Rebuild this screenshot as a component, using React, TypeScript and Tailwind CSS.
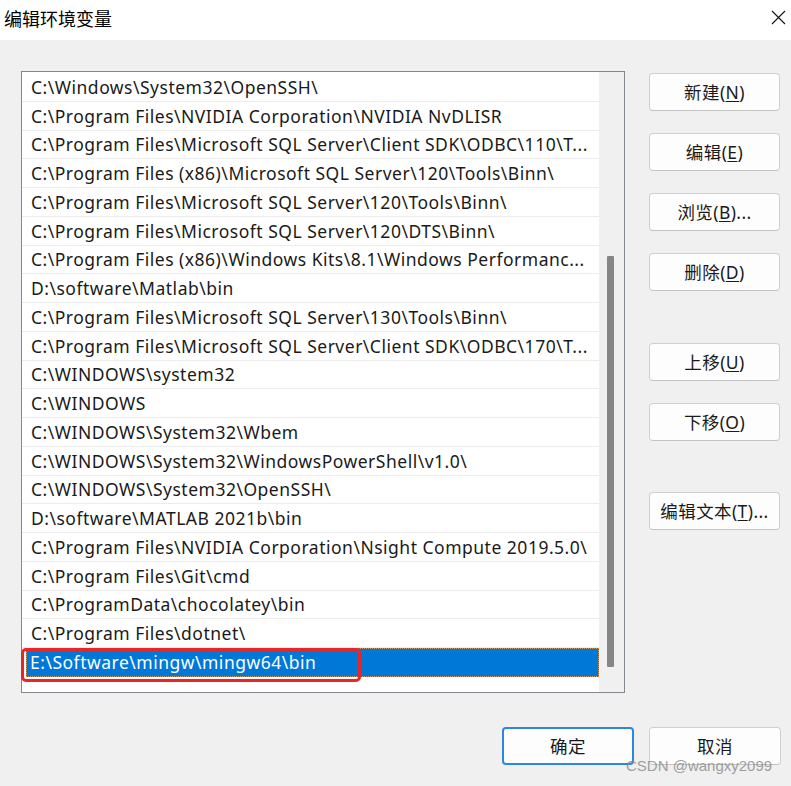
import React from "react";

const paths = [
  "C:\\Windows\\System32\\OpenSSH\\",
  "C:\\Program Files\\NVIDIA Corporation\\NVIDIA NvDLISR",
  "C:\\Program Files\\Microsoft SQL Server\\Client SDK\\ODBC\\110\\T...",
  "C:\\Program Files (x86)\\Microsoft SQL Server\\120\\Tools\\Binn\\",
  "C:\\Program Files\\Microsoft SQL Server\\120\\Tools\\Binn\\",
  "C:\\Program Files\\Microsoft SQL Server\\120\\DTS\\Binn\\",
  "C:\\Program Files (x86)\\Windows Kits\\8.1\\Windows Performanc...",
  "D:\\software\\Matlab\\bin",
  "C:\\Program Files\\Microsoft SQL Server\\130\\Tools\\Binn\\",
  "C:\\Program Files\\Microsoft SQL Server\\Client SDK\\ODBC\\170\\T...",
  "C:\\WINDOWS\\system32",
  "C:\\WINDOWS",
  "C:\\WINDOWS\\System32\\Wbem",
  "C:\\WINDOWS\\System32\\WindowsPowerShell\\v1.0\\",
  "C:\\WINDOWS\\System32\\OpenSSH\\",
  "D:\\software\\MATLAB 2021b\\bin",
  "C:\\Program Files\\NVIDIA Corporation\\Nsight Compute 2019.5.0\\",
  "C:\\Program Files\\Git\\cmd",
  "C:\\ProgramData\\chocolatey\\bin",
  "C:\\Program Files\\dotnet\\",
];

const font = { fontFamily: '"Noto Sans", "Noto Sans CJK SC", sans-serif' };

function Btn({ label, hot, suffix, className = "" }: { label: string; hot: string; suffix?: string; className?: string }) {
  return (
    <div
      className={`h-[38px] w-[131px] rounded-[4px] border border-[#d0d0d0] border-b-[#c4c4c4] bg-[#fdfdfd] flex items-center justify-center text-[17.5px] tracking-[0.4px] text-[#1a1a1a] ${className}`}
    >
      <span>
        {label}(<span className="underline underline-offset-2">{hot}</span>){suffix}
      </span>
    </div>
  );
}

export default function App() {
  return (
    <div className="relative w-[791px] h-[786px] bg-[#f0f0f0] flex flex-col overflow-hidden" style={font}>
      {/* title bar */}
      <div className="h-[40px] bg-white flex items-center justify-between pl-[4px] pr-[5px] shrink-0">
        <span className="text-[18px] text-black leading-none -mt-[3px]">编辑环境变量</span>
        <svg width="15" height="15" viewBox="0 0 15 15" className="-mt-[5px]">
          <path d="M1 1 L14 14 M14 1 L1 14" stroke="#111" strokeWidth="1.1" fill="none" />
        </svg>
      </div>

      {/* body */}
      <div className="flex pt-[31px] pl-[21px]">
        {/* list box */}
        <div className="w-[604px] h-[622px] border border-[#828790] bg-white flex">
          <div className="w-[577px] pt-[1px] flex flex-col">
            {paths.map((p, i) => (
              <div
                key={i}
                className="h-[28.75px] shrink-0 border-b border-[#ececec] flex items-center pl-[9px] text-[17.5px] tracking-[0.5px] text-[#1a1a1a] whitespace-nowrap"
              >
                <span>{p}</span>
              </div>
            ))}
            <div className="h-[28.75px] shrink-0 pl-[4px] flex">
              <div className="flex-1 bg-[#0078d7] border border-dotted border-[#c89868] flex items-center pl-[3px] text-[17.5px] tracking-[0.5px] text-white whitespace-nowrap">
                <span>E:\Software\mingw\mingw64\bin</span>
              </div>
            </div>
          </div>
          {/* scrollbar */}
          <div className="w-[25px] bg-[#f0f0f0] relative">
            <div className="absolute left-[8px] top-[184px] w-[7px] h-[411px] bg-[#868686] rounded-[1px]" />
          </div>
        </div>

        {/* side buttons */}
        <div className="ml-[24px] mt-[2px] flex flex-col">
          <Btn label="新建" hot="N" />
          <Btn label="编辑" hot="E" className="mt-[22px]" />
          <Btn label="浏览" hot="B" suffix="..." className="mt-[22px]" />
          <Btn label="删除" hot="D" className="mt-[22px]" />
          <Btn label="上移" hot="U" className="mt-[52px]" />
          <Btn label="下移" hot="O" className="mt-[22px]" />
          <Btn label="编辑文本" hot="T" suffix="..." className="mt-[51px]" />
        </div>
      </div>

      {/* bottom buttons */}
      <div className="flex pl-[502px] mt-[34px] gap-[15px]">
        <div className="h-[38px] w-[132px] rounded-[4px] border-2 border-[#2e86de] bg-[#fdfdfd] flex items-center justify-center text-[17.5px] tracking-[0.4px] text-[#1a1a1a]">
          确定
        </div>
        <div className="h-[38px] w-[132px] rounded-[4px] border border-[#d0d0d0] border-b-[#c4c4c4] bg-[#fdfdfd] flex items-center justify-center text-[17.5px] tracking-[0.4px] text-[#1a1a1a]">
          取消
        </div>
      </div>

      {/* red annotation box */}
      <div className="absolute left-[21px] top-[648px] w-[340px] h-[34px] border-[3px] border-[#e8262a] rounded-[5px]" />

      {/* watermark */}
      <div
        className="absolute left-[626px] top-[758px] text-[15px] text-[#8a8a8a] opacity-80 leading-none"
        style={{ fontFamily: '"Liberation Sans", Arial, sans-serif' }}
      >
        CSDN @wangxy2099
      </div>
    </div>
  );
}
